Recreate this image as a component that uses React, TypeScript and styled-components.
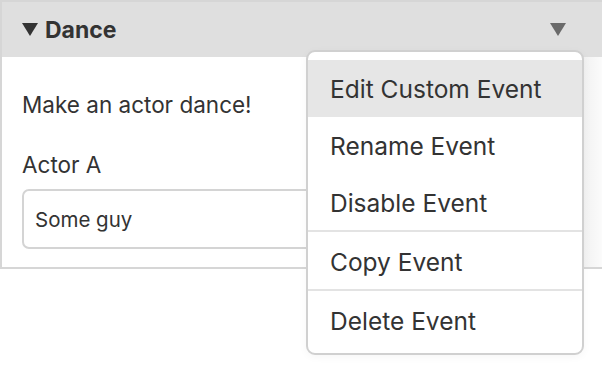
import React from "react";
import styled, { createGlobalStyle } from "styled-components";

const Global = createGlobalStyle`
  html, body { margin: 0; padding: 0; background: #fff; }
  body { font-family: Inter, "Noto Sans", "Liberation Sans", sans-serif; color: #333; }
  * { box-sizing: border-box; }
`;

const Page = styled.div`
  position: relative;
  width: 602px;
  height: 374px;
`;

const Panel = styled.section`
  width: 602px;
  border: 2px solid #d6d6d6;
  border-right-width: 0;
`;

const Header = styled.div`
  height: 55px;
  background: #dfdfdf;
  display: flex;
  align-items: center;
  padding: 0 36px 0 20px;
`;

const Title = styled.div`
  flex: 1;
  display: flex;
  align-items: center;
  gap: 7px;
  font-size: 23px;
  font-weight: 700;
  color: #333;
`;

const Body = styled.div`
  padding: 32px 20px 18px;
  background: linear-gradient(90deg, #fff 0, #fff 581px, #f1f1f1 581px, #fbfbfb 100%);
  display: flex;
  flex-direction: column;
`;

const Text = styled.div<{ $gap?: number }>`
  font-size: 22.5px;
  line-height: 30px;
  padding-top: 1px;
  color: #333;
  margin-bottom: ${(p) => p.$gap ?? 0}px;
`;

const Input = styled.div`
  height: 60px;
  width: 558px;
  border: 2px solid #d4d4d4;
  border-radius: 7px;
  display: flex;
  align-items: center;
  padding-left: 11px;
  font-size: 20.5px;
  color: #333;
  background: #fff;
`;

const Menu = styled.div`
  position: absolute;
  left: 306px;
  top: 50px;
  width: 278px;
  background: #fff;
  border: 2px solid #d0d0d0;
  border-radius: 9px;
  padding: 8px 0 4px;
  box-shadow: 0 2px 8px rgba(0, 0, 0, 0.04);
`;

const Item = styled.div<{ $active?: boolean }>`
  height: 57px;
  display: flex;
  align-items: center;
  padding: 1px 0 0 22px;
  font-size: 24.5px;
  color: #333;
  background: ${(p) => (p.$active ? "#e6e6e6" : "transparent")};
`;

const Separator = styled.div`
  height: 2px;
  margin-top: -1px;
  margin-bottom: 1px;
  background: #e3e3e3;
`;

const Down = ({ color, w, h }: { color: string; w: number; h: number }) => (
  <svg width={w} height={h} viewBox={`0 0 ${w} ${h}`}>
    <polygon points={`0,0 ${w},0 ${w / 2},${h}`} fill={color} />
  </svg>
);

export default function App() {
  return (
    <Page>
      <Global />
      <Panel>
        <Header>
          <Title>
            <Down color="#333" w={16} h={13} />
            <span>Dance</span>
          </Title>
          <Down color="#6a6a6a" w={16} h={13} />
        </Header>
        <Body>
          <Text $gap={29}>Make an actor dance!</Text>
          <Text $gap={9}>Actor A</Text>
          <Input>Some guy</Input>
        </Body>
      </Panel>
      <Menu>
        <Item $active>Edit Custom Event</Item>
        <Item>Rename Event</Item>
        <Item>Disable Event</Item>
        <Separator />
        <Item>Copy Event</Item>
        <Separator />
        <Item>Delete Event</Item>
      </Menu>
    </Page>
  );
}
